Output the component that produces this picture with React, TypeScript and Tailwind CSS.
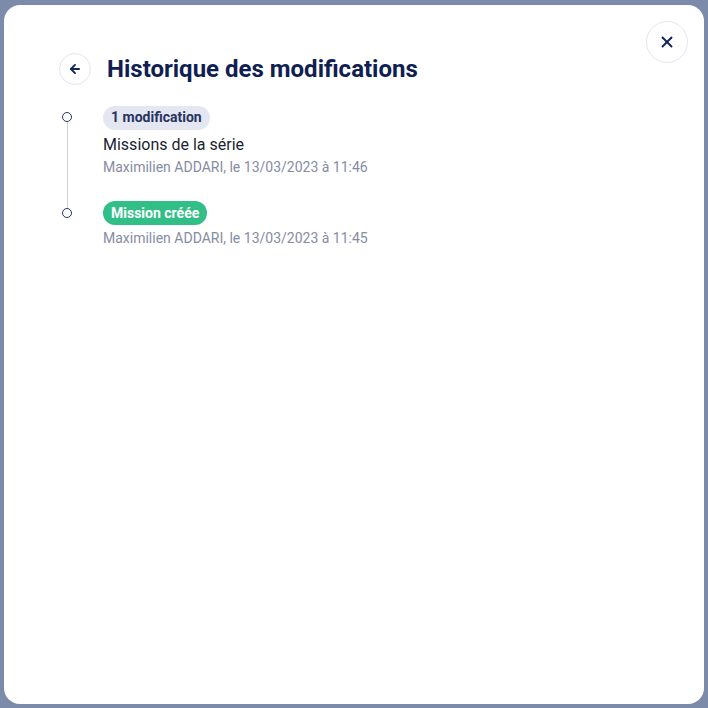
import { ArrowLeft, X } from "lucide-react";

type Entry = {
  badge: string;
  tone: "neutral" | "success";
  label?: string;
  meta: string;
};

const entries: Entry[] = [
  {
    badge: "1 modification",
    tone: "neutral",
    label: "Missions de la série",
    meta: "Maximilien ADDARI, le 13/03/2023 à 11:46",
  },
  {
    badge: "Mission créée",
    tone: "success",
    meta: "Maximilien ADDARI, le 13/03/2023 à 11:45",
  },
];

function TimelineItem({ entry, last }: { entry: Entry; last: boolean }) {
  return (
    <div className={`relative flex ${last ? "" : "pb-[24px]"}`}>
      {!last && (
        <span className="absolute left-[11.5px] top-[17px] bottom-[-7px] w-px bg-[#cdd1e2]" />
      )}
      <div className="relative w-[24px] shrink-0">
        <span className="absolute left-[7px] top-[7px] h-[10px] w-[10px] rounded-full border-[1.5px] border-[#24356a] bg-white" />
      </div>
      <div className="ml-[24px] flex flex-col">
        <div>
          <span
            className={`inline-flex h-[24px] items-center rounded-full px-[8px] text-[14px] font-bold ${
              entry.tone === "success"
                ? "bg-[#32bf87] text-white"
                : "bg-[#e4e6f2] text-[#26345f]"
            }`}
          >
            {entry.badge}
          </span>
        </div>
        {entry.label && (
          <p className="mt-[3px] text-[16px] leading-[24px] text-[#1b1f33]">
            {entry.label}
          </p>
        )}
        <p
          className={`${
            entry.label ? "" : "mt-[3px]"
          } text-[14px] leading-[20px] text-[#868ca4]`}
        >
          {entry.meta}
        </p>
      </div>
    </div>
  );
}

export default function App() {
  return (
    <div
      className="h-[708px] w-[708px] bg-[#7d8bab] pl-[4px] pr-[4px] pt-[5px] pb-[4px]"
      style={{ fontFamily: "Roboto, 'Noto Sans', sans-serif" }}
    >
      <div className="relative h-full w-full rounded-2xl bg-white pl-[55px] pt-[48px]">
        <button className="absolute right-[16px] top-[16px] flex h-[42px] w-[42px] items-center justify-center rounded-full border border-[#e4e6f1] bg-white text-[#14275a]">
          <X size={18} strokeWidth={2.5} />
        </button>

        <div className="flex items-center gap-[16px]">
          <button className="flex h-[32px] w-[32px] items-center justify-center rounded-full border border-[#e4e6f1] bg-white text-[#14275a]">
            <ArrowLeft size={14} strokeWidth={3.25} />
          </button>
          <h1 className="text-[24px] font-bold leading-[32px] text-[#0e2052]">
            Historique des modifications
          </h1>
        </div>

        <div className="-ml-[4px] mt-[20px] flex flex-col">
          {entries.map((e, i) => (
            <TimelineItem key={i} entry={e} last={i === entries.length - 1} />
          ))}
        </div>
      </div>
    </div>
  );
}
